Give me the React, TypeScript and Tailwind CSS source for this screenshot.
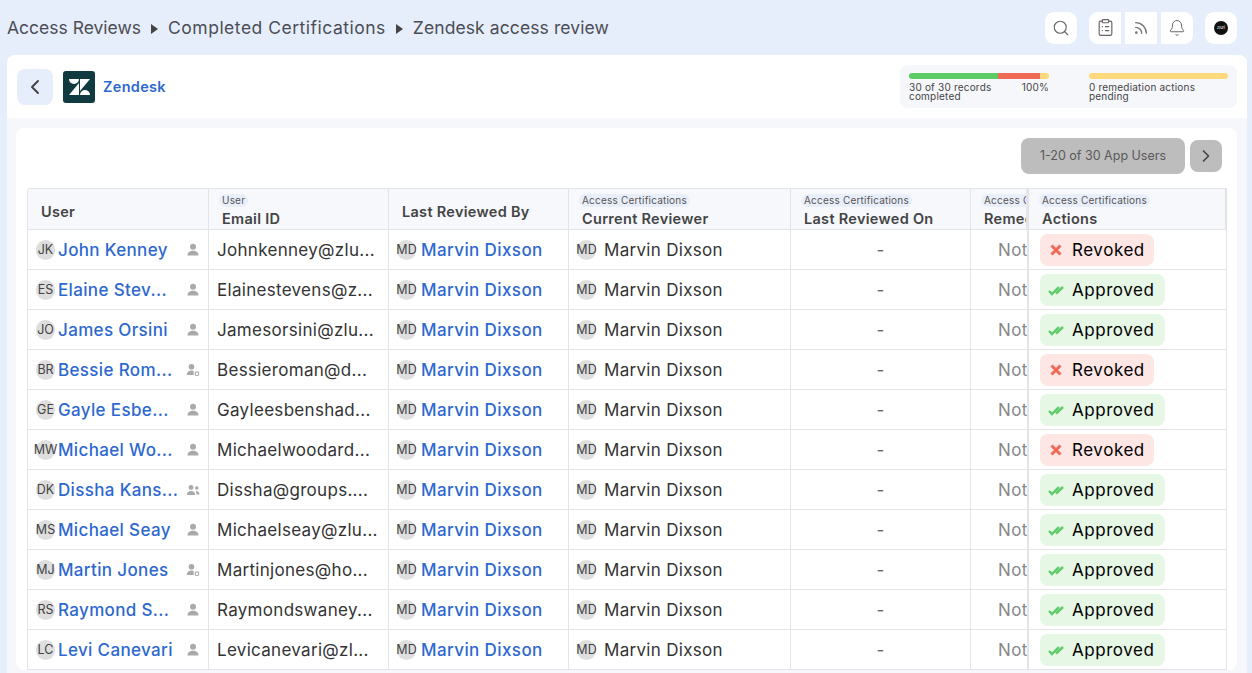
import { ChevronLeft, ChevronRight, Search, ClipboardList, Rss, Bell } from "lucide-react";

const users = [
  { in: "JK", name: "John Kenney", email: "Johnkenney@zlu...", kind: "user", ok: false },
  { in: "ES", name: "Elaine Stev...", email: "Elainestevens@z...", kind: "user", ok: true },
  { in: "JO", name: "James Orsini", email: "Jamesorsini@zlu...", kind: "user", ok: true },
  { in: "BR", name: "Bessie Rom...", email: "Bessieroman@d...", kind: "gear", ok: false },
  { in: "GE", name: "Gayle Esbe...", email: "Gayleesbenshad...", kind: "user", ok: true },
  { in: "MW", name: "Michael Wo...", email: "Michaelwoodard...", kind: "user", ok: false },
  { in: "DK", name: "Dissha Kans...", email: "Dissha@groups....", kind: "group", ok: true },
  { in: "MS", name: "Michael Seay", email: "Michaelseay@zlu...", kind: "user", ok: true },
  { in: "MJ", name: "Martin Jones", email: "Martinjones@ho...", kind: "gear", ok: true },
  { in: "RS", name: "Raymond S...", email: "Raymondswaney...", kind: "user", ok: true },
  { in: "LC", name: "Levi Canevari", email: "Levicanevari@zl...", kind: "user", ok: true },
];

const cols = "grid grid-cols-[181px_180px_180px_222px_180px_56px_200px]";

function UserKind({ kind }: { kind: string }) {
  return (
    <svg width="14" height="14" viewBox="0 0 14 14" fill="#a9a9a9">
      {kind === "group" ? (
        <>
          <circle cx="5" cy="4.5" r="2.4" />
          <path d="M0.8 12c0-2.6 1.8-4 4.2-4s4.2 1.400 4.200 4z" />
          <circle cx="10.800" cy="5" r="1.800" />
          <path d="M10.200 8c2 0 3.300 1.200 3.300 3.500h-3c0-1.400-.3-2.500-1-3.200z" />
        </>
      ) : kind === "gear" ? (
        <>
          <circle cx="5.500" cy="3.800" r="2.800" />
          <path d="M0.800 12c0-3 2-4.600 4.700-4.600 1 0 1.800.2 2.500.6-.5.900-.6 2.500 0 4z" />
          <circle cx="11" cy="10.800" r="1.900" fill="none" stroke="#a9a9a9" strokeWidth="1.100" />
        </>
      ) : (
        <>
          <circle cx="7" cy="3.800" r="3" />
          <path d="M1.500 12.500c0-3.200 2.300-4.700 5.500-4.700s5.500 1.500 5.500 4.700z" />
        </>
      )}
    </svg>
  );
}

function Avatar({ text }: { text: string }) {
  return (
    <span className="mt-[1px] flex h-5 w-[19px] shrink-0 items-center justify-center whitespace-nowrap rounded-full bg-[#dedede] pt-[1px] text-[12.500px] leading-none text-[#444]">
      {text}
    </span>
  );
}

function Head({ tag, title }: { tag?: string; title: string }) {
  return (
    <div className="flex h-full flex-col justify-end overflow-hidden border-r border-[#e2e4e8] pl-[13px]">
      {tag && (
        <span className="-ml-[3px] mb-[2px] w-fit whitespace-nowrap rounded-full bg-[#e9effa] px-[3px] text-[10px] leading-[13px] tracking-[0.2px] text-[#555]">
          {tag}
        </span>
      )}
      <span className="whitespace-nowrap text-[14.500px] font-semibold leading-[20px] tracking-[0.3px] text-[#444]">{title}</span>
    </div>
  );
}

export default function App() {
  return (
    <div className="h-[673px] w-[1252px] overflow-hidden bg-[#e7eefb] font-['Inter',sans-serif] text-[#222]">
      {/* Top bar */}
      <div className="flex h-[55px] items-center justify-between pl-[7px] pr-[15px]">
        <div className="flex items-center gap-[10px] pt-[2px] text-[17.500px] text-[#4a4d55]">
          <span>Access Reviews</span>
          <span className="h-0 w-0 border-y-[5px] border-l-[7px] border-y-transparent border-l-[#444]" />
          <span className="tracking-[0.5px]">Completed Certifications</span>
          <span className="h-0 w-0 border-y-[5px] border-l-[7px] border-y-transparent border-l-[#444]" />
          <span className="tracking-[0.1px]">Zendesk access review</span>
        </div>
        <div className="flex items-center">
          <span className="mr-[12px] flex h-8 w-8 items-center justify-center rounded-[9px] bg-white">
            <Search size={18} strokeWidth={1.500} className="text-[#666]" />
          </span>
          <span className="mr-[4px] flex h-8 w-8 items-center justify-center rounded-l-[9px] bg-white">
            <ClipboardList size={19} strokeWidth={1.500} className="text-[#666]" />
          </span>
          <span className="mr-[4px] flex h-8 w-8 items-center justify-center bg-white">
            <Rss size={16} strokeWidth={2} className="text-[#777]" />
          </span>
          <span className="mr-[12px] flex h-8 w-8 items-center justify-center rounded-r-[9px] bg-white">
            <Bell size={18} strokeWidth={1.300} className="text-[#666]" />
          </span>
          <span className="flex h-8 w-8 items-center justify-center rounded-[9px] bg-white">
            <span className="flex h-[14px] w-[14px] items-center justify-center rounded-full bg-[#111] text-[4px] text-white">
              zluri
            </span>
          </span>
        </div>
      </div>

      {/* Panel */}
      <div className="ml-[7px] h-[618px] w-[1240px] overflow-hidden rounded-t-[8px] bg-[#f6f7fb]">
        <div className="flex h-[63px] items-center justify-between bg-white pl-[10px] pr-[10px]">
          <div className="flex items-center">
            <span className="flex h-9 w-9 items-center justify-center rounded-[8px] bg-[#e7eefb]">
              <ChevronLeft size={24} strokeWidth={2} className="text-[#444]" />
            </span>
            <span className="ml-[10px] flex h-8 w-8 items-center justify-center rounded-[3px] bg-[#0f3a40]">
              <svg width="21" height="16" viewBox="0 0 21 16" fill="#fff">
                <path d="M0 0h10a5 5 0 0 1-10 0z" />
                <path d="M11 0h10L11 12z" />
                <path d="M10 4v12H0z" />
                <path d="M11 16a5 5 0 0 1 10 0z" />
              </svg>
            </span>
            <span className="ml-2 text-[14.500px] font-semibold tracking-[0.3px] text-[#2d68cf]">Zendesk</span>
          </div>
          <div className="flex h-[43px] w-[337px] gap-[40px] rounded-[8px] bg-[#f6f7fb] px-[9px] pt-2">
            <div className="w-[140px]">
              <div className="flex h-[6px] overflow-hidden rounded-full">
                <span className="w-[89px] bg-[#5dcb66]" />
                <span className="w-[42px] bg-[#ee6a55]" />
                <span className="w-[9px] bg-[#fdd97c]" />
              </div>
              <div className="mt-[4px] flex justify-between text-[10px] leading-[9px] tracking-[0.2px] text-[#444]">
                <span className="w-[90px]">30 of 30 records completed</span>
                <span>100%</span>
              </div>
            </div>
            <div className="w-[140px]">
              <div className="h-[6px] rounded-full bg-[#fdd97c]" />
              <div className="mt-[4px] w-[115px] text-[10px] leading-[9px] tracking-[0.2px] text-[#444]">0 remediation actions pending</div>
            </div>
          </div>
        </div>

        <div className="ml-[9px] mr-[10px] mt-[10px] rounded-[8px] bg-white px-[11px] pt-[10px]">
          <div className="flex items-center justify-end gap-[5px] pr-[4px]">
            <span className="flex h-9 w-[164px] items-center justify-center rounded-[8px] bg-[#bdbdbd] text-[12.500px] text-[#5a5a5a]">
              1-20 of 30 App Users
            </span>
            <span className="flex h-8 w-8 items-center justify-center rounded-[8px] bg-[#bdbdbd]">
              <ChevronRight size={20} className="text-[#444]" />
            </span>
          </div>

          <div className="mt-[14px] w-[1200px] rounded-t-[4px] border-l border-[#e2e4e8]">
            <div className={`${cols} h-[42px] border-y border-[#e2e4e8] bg-[#f6f8fc]`}>
              <div className="flex items-center border-r border-[#e2e4e8] pl-[13px] pt-[6px] text-[14.500px] font-semibold tracking-[0.3px] text-[#444]">User</div>
              <Head tag="User" title="Email ID" />
              <div className="flex items-center border-r border-[#e2e4e8] pl-[13px] pt-[6px] text-[14.500px] font-semibold tracking-[0.3px] text-[#444]">Last Reviewed By</div>
              <Head tag="Access Certifications" title="Current Reviewer" />
              <Head tag="Access Certifications" title="Last Reviewed On" />
              <Head tag="Access Certifications" title="Remediation" />
              <div className="border-l-2 border-r border-[#e2e4e8]">
                <Head tag="Access Certifications" title="Actions" />
              </div>
            </div>
            {users.map((u) => (
              <div key={u.in} className={`${cols} h-10 border-b border-[#e2e4e8] text-[17px]`}>
                <div className="flex items-center border-r border-[#e2e4e8] pl-[8px]">
                  <Avatar text={u.in} />
                  <span className="ml-[3px] whitespace-nowrap pt-[2px] font-medium tracking-[0.35px] text-[#2d68cf]">{u.name}</span>
                  <span className="ml-auto mr-[8px]">
                    <UserKind kind={u.kind} />
                  </span>
                </div>
                <div className="flex items-center whitespace-nowrap border-r border-[#e2e4e8] pl-[8px] pt-[2px] tracking-[0.3px] text-[#333]">{u.email}</div>
                <div className="flex items-center border-r border-[#e2e4e8] pl-[8px]">
                  <Avatar text="MD" />
                  <span className="ml-[5px] whitespace-nowrap pt-[2px] font-medium tracking-[0.4px] text-[#2d68cf]">Marvin Dixson</span>
                </div>
                <div className="flex items-center border-r border-[#e2e4e8] pl-[8px]">
                  <Avatar text="MD" />
                  <span className="ml-[8px] whitespace-nowrap pt-[2px] tracking-[0.3px] text-[#333]">Marvin Dixson</span>
                </div>
                <div className="flex items-center justify-center border-r border-[#e2e4e8] pt-[2px] text-[#666]">-</div>
                <div className="flex items-center overflow-hidden pl-[27px] pt-[2px] tracking-[0.4px] text-[#888]">
                  <span className="whitespace-nowrap">Not available</span>
                </div>
                <div className="flex items-center border-l-2 border-r border-[#e2e4e8] pl-[11px]">
                  {u.ok ? (
                    <span className="flex h-8 w-[125px] items-center rounded-[8px] bg-[#e6f7e6] pl-[8px]">
                      <svg width="16" height="12" viewBox="0 0 16 12" fill="none" stroke="#5dcb66" strokeWidth="2.400">
                        <path d="M1 7l3 3 7-7" />
                        <path d="M8 9.500L15 3" />
                      </svg>
                      <span className="ml-[8px] pt-[2px] tracking-[0.55px] text-black">Approved</span>
                    </span>
                  ) : (
                    <span className="flex h-8 w-[114px] items-center rounded-[8px] bg-[#fde6e4] pl-[10px]">
                      <svg width="12" height="12" viewBox="0 0 12 12" fill="none" stroke="#ee6a55" strokeWidth="3">
                        <path d="M1.500 1.500l9 9M10.500 1.500l-9 9" />
                      </svg>
                      <span className="ml-[10px] pt-[2px] tracking-[0.55px] text-black">Revoked</span>
                    </span>
                  )}
                </div>
              </div>
            ))}
          </div>
        </div>
      </div>
    </div>
  );
}
